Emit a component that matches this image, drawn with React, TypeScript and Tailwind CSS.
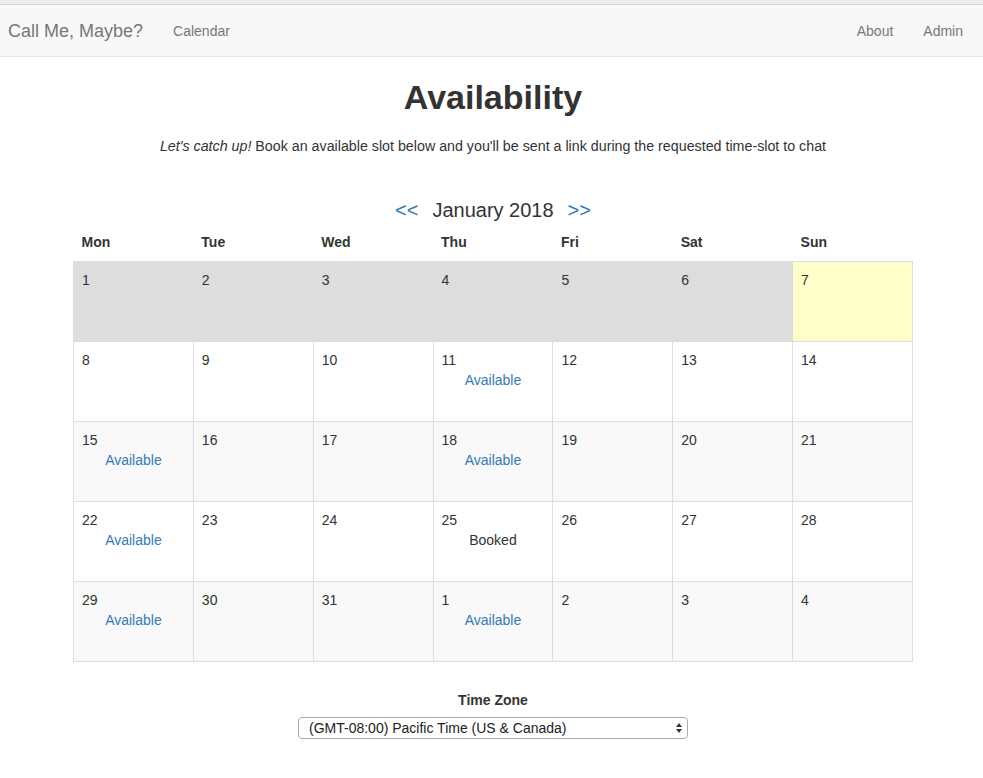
import { useState } from "react";

type Day = { n: number; other?: boolean; slot?: "Available" | "Booked" };

const weekdays = ["Mon", "Tue", "Wed", "Thu", "Fri", "Sat", "Sun"];

const weeks: Day[][] = [
  [{ n: 1 }, { n: 2 }, { n: 3 }, { n: 4 }, { n: 5 }, { n: 6 }, { n: 7 }],
  [{ n: 8 }, { n: 9 }, { n: 10 }, { n: 11, slot: "Available" }, { n: 12 }, { n: 13 }, { n: 14 }],
  [{ n: 15, slot: "Available" }, { n: 16 }, { n: 17 }, { n: 18, slot: "Available" }, { n: 19 }, { n: 20 }, { n: 21 }],
  [{ n: 22, slot: "Available" }, { n: 23 }, { n: 24 }, { n: 25, slot: "Booked" }, { n: 26 }, { n: 27 }, { n: 28 }],
  [
    { n: 29, slot: "Available" },
    { n: 30 },
    { n: 31 },
    { n: 1, other: true, slot: "Available" },
    { n: 2, other: true },
    { n: 3, other: true },
    { n: 4, other: true },
  ],
];

// first week is greyed out (past), then the usual table stripes
function rowBg(i: number) {
  if (i === 0) return "bg-[#dddddd]";
  return i % 2 === 0 ? "bg-[#f9f9f9]" : "bg-white";
}

export default function App() {
  const [tz, setTz] = useState("pst");

  return (
    <div className="min-h-screen bg-white font-['Liberation_Sans',Arial,sans-serif] text-[14px] leading-5 text-[#333]">
      <div className="h-1 bg-[#ececec]" />
      <nav className="flex h-[53px] items-center justify-between border-y border-t-[#d6d6d6] border-b-[#e7e7e7] bg-[#f8f8f8] text-[#777]">
        <div className="flex items-center">
          <a className="pl-2 text-[18px]">Call Me, Maybe?</a>
          <a className="ml-[30px]">Calendar</a>
        </div>
        <div className="flex items-center gap-[30px] pr-5">
          <a>About</a>
          <a>Admin</a>
        </div>
      </nav>

      <main className="ml-[73px] w-[840px]">
        <h1 className="mt-[20px] text-center text-[34px] leading-[40px] font-bold">Availability</h1>
        <p className="mt-[19px] text-center text-[14.25px]">
          <em>Let's catch up!</em> Book an available slot below and you'll be sent a link during the
          requested time-slot to chat
        </p>

        <div className="mt-[40px] flex items-center justify-center gap-[14px] text-[20px] leading-7">
          <a className="text-[#337ab7]">&lt;&lt;</a>
          <span>January 2018</span>
          <a className="text-[#337ab7]">&gt;&gt;</a>
        </div>

        <table className="mt-[6px] w-full table-fixed border-collapse">
          <thead>
            <tr>
              {weekdays.map((d) => (
                <th key={d} className="px-2 pt-[2px] pb-[9px] text-left font-bold">
                  {d}
                </th>
              ))}
            </tr>
          </thead>
          <tbody>
            {weeks.map((week, i) => (
              <tr key={i} className={rowBg(i)}>
                {week.map((day, j) => {
                  const today = i === 0 && j === 6;
                  return (
                    <td
                      key={j}
                      className={`h-20 border border-[#dddddd] p-2 align-top ${today ? "bg-[#ffffcc]" : ""}`}
                    >
                      <div>{day.n}</div>
                      {day.slot && (
                        <div
                          className={`text-center ${day.slot === "Available" ? "text-[#337ab7]" : "text-[#333]"}`}
                        >
                          {day.slot}
                        </div>
                      )}
                    </td>
                  );
                })}
              </tr>
            ))}
          </tbody>
        </table>

        <div className="mt-[28px] flex flex-col items-center">
          <label className="font-bold">Time Zone</label>
          <div className="relative mt-[7px] w-[390px]">
            <select
              value={tz}
              onChange={(e) => setTz(e.target.value)}
              className="h-[22px] w-full appearance-none rounded-[4px] border border-[#aaaaaa] bg-white pl-[10px] text-[14px] leading-5 text-[#222]"
            >
              <option value="pst">(GMT-08:00) Pacific Time (US &amp; Canada)</option>
              <option value="mst">(GMT-07:00) Mountain Time (US &amp; Canada)</option>
              <option value="cst">(GMT-06:00) Central Time (US &amp; Canada)</option>
              <option value="est">(GMT-05:00) Eastern Time (US &amp; Canada)</option>
            </select>
            <svg
              className="pointer-events-none absolute top-[6px] right-[6px]"
              width="6"
              height="10"
              viewBox="0 0 6 10"
            >
              <path d="M3 0 L6 4 L0 4 Z" fill="#333" />
              <path d="M0 6 L6 6 L3 10 Z" fill="#333" />
            </svg>
          </div>
        </div>
      </main>
    </div>
  );
}
